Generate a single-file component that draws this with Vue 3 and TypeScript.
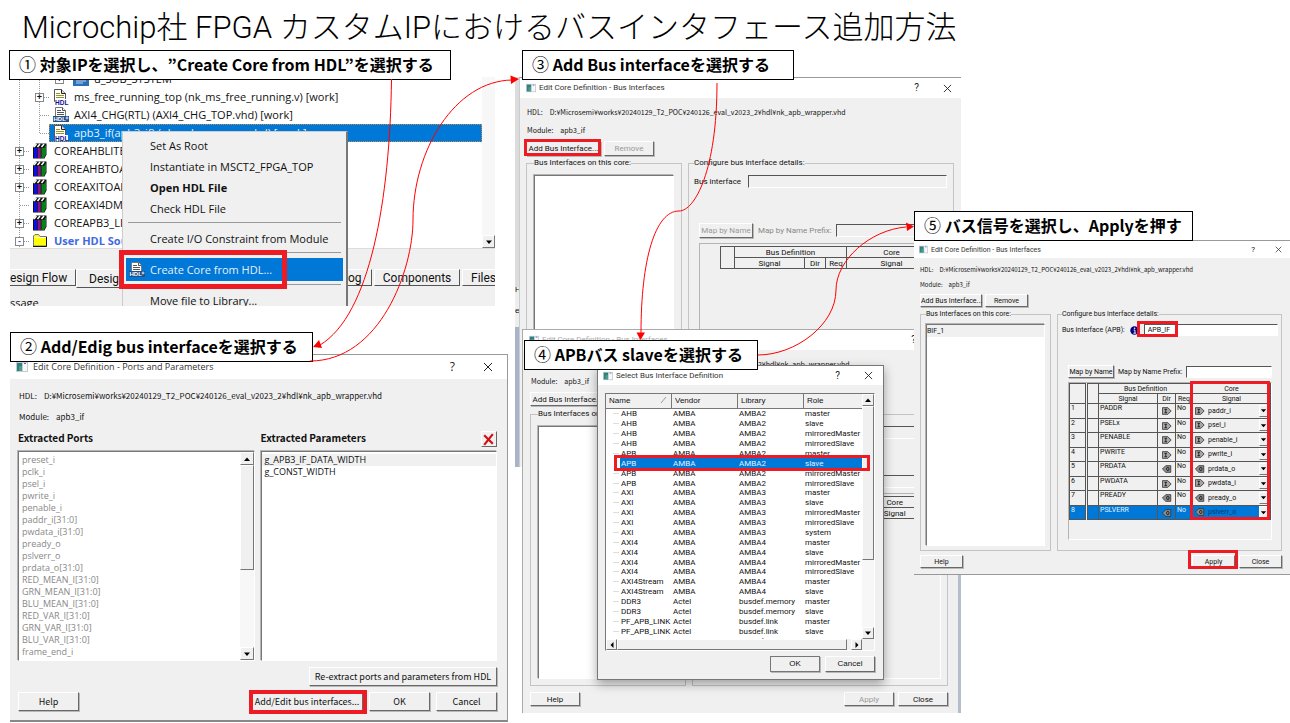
<script setup lang="ts">
interface TreeRow { label: string; icon: 'chip' | 'doc' | 'docplus' | 'books' | 'folder'; level: number; expand?: '+' | '-'; selected?: boolean; folder?: boolean }
interface BusRow { name: string; vendor: string; library: string; role: string }
interface SignalRow { bus: string; dir: 'I' | 'O'; core: string }

const hdlPath = 'D:¥Microsemi¥works¥20240129_T2_POC¥240126_eval_v2023_2¥hdl¥nk_apb_wrapper.vhd'

const tree: TreeRow[] = [
  { label: 'u_SUB_SYSTEM', icon: 'chip', level: 2, expand: '+' },
  { label: 'ms_free_running_top (nk_ms_free_running.v) [work]', icon: 'doc', level: 1, expand: '+' },
  { label: 'AXI4_CHG(RTL) (AXI4_CHG_TOP.vhd) [work]', icon: 'docplus', level: 1 },
  { label: 'apb3_if(apb3_if) (nk_apb_wrapper.vhd) [work]', icon: 'doc', level: 1, selected: true },
  { label: 'COREAHBLITE_LIB', icon: 'books', level: 0, expand: '+' },
  { label: 'COREAHBTOAPB3_LIB', icon: 'books', level: 0, expand: '+' },
  { label: 'COREAXITOAHBL_LIB', icon: 'books', level: 0, expand: '+' },
  { label: 'COREAXI4DMA_LIB', icon: 'books', level: 0 },
  { label: 'COREAPB3_LIB', icon: 'books', level: 0, expand: '+' },
  { label: 'User HDL Source Files', icon: 'folder', level: 0, expand: '-', folder: true },
]

const ports: string[] = ['preset_i', 'pclk_i', 'psel_i', 'pwrite_i', 'penable_i', 'paddr_i[31:0]', 'pwdata_i[31:0]', 'pready_o', 'pslverr_o', 'prdata_o[31:0]', 'RED_MEAN_I[31:0]', 'GRN_MEAN_I[31:0]', 'BLU_MEAN_I[31:0]', 'RED_VAR_I[31:0]', 'GRN_VAR_I[31:0]', 'BLU_VAR_I[31:0]', 'frame_end_i']

function group(name: string, vendor: string, library: string, roles: string[]): BusRow[] {
  return roles.map((role) => ({ name, vendor, library, role }))
}
const four = ['master', 'slave', 'mirroredMaster', 'mirroredSlave']
const two = ['master', 'slave']
const buses: BusRow[] = [
  ...group('AHB', 'AMBA', 'AMBA2', four),
  ...group('APB', 'AMBA', 'AMBA2', four),
  ...group('AXI', 'AMBA', 'AMBA3', [...four, 'system']),
  ...group('AXI4', 'AMBA', 'AMBA4', four),
  ...group('AXI4Stream', 'AMBA', 'AMBA4', two),
  ...group('DDR3', 'Actel', 'busdef.memory', two),
  ...group('PF_APB_LINK', 'Actel', 'busdef.link', two),
  ...group('PF_CDR_CLK', 'Actel', 'busdef.clock', ['master']),
]
const selectedBus = 5

const signals: SignalRow[] = [
  { bus: 'PADDR', dir: 'I', core: 'paddr_i' },
  { bus: 'PSELx', dir: 'I', core: 'psel_i' },
  { bus: 'PENABLE', dir: 'I', core: 'penable_i' },
  { bus: 'PWRITE', dir: 'I', core: 'pwrite_i' },
  { bus: 'PRDATA', dir: 'O', core: 'prdata_o' },
  { bus: 'PWDATA', dir: 'I', core: 'pwdata_i' },
  { bus: 'PREADY', dir: 'O', core: 'pready_o' },
  { bus: 'PSLVERR', dir: 'O', core: 'pslverr_o' },
]

const marks = [
  { x: 119, y: 250, w: 168, h: 39, s: 5 },
  { x: 249, y: 690, w: 118, h: 24, s: 4 },
  { x: 524, y: 139, w: 77, h: 17, s: 3 },
  { x: 614, y: 455, w: 256, h: 16, s: 3 },
  { x: 1137, y: 321, w: 41, h: 16, s: 3 },
  { x: 1190, y: 381, w: 80, h: 139, s: 3 },
  { x: 1188, y: 550, w: 50, h: 19, s: 3 },
]
</script>

<template>
  <main class="slide">
    <svg class="defs" aria-hidden="true">
      <symbol id="i-window" viewBox="0 0 12 12">
        <rect x="0" y="1" width="12" height="10" fill="#c3ccd2" />
        <rect x="1" y="2" width="5" height="8" fill="#2e7f86" />
        <rect x="3" y="5" width="3" height="5" fill="#4da07c" />
        <rect x="7" y="2" width="4" height="8" fill="#f6f8fa" />
        <rect x="8" y="2" width="2" height="1" fill="#3c6fb4" />
      </symbol>
      <symbol id="i-close" viewBox="0 0 10 10"><path d="M1 1L9 9M9 1L1 9" stroke="#222" stroke-width="1" fill="none" /></symbol>
      <symbol id="i-doc" viewBox="0 0 16 16">
        <path d="M1.500 .500H8.500L12.500 4.500V12.500H1.500Z" fill="#fff" stroke="#555" />
        <path d="M8.500 .500V4.500H12.500" fill="#ddd" stroke="#222" />
        <path d="M3 4.500H7M3 6.500H11M3 8.500H11" stroke="#97932b" />
        <rect x="2" y="10" width="13" height="6" fill="#fff" />
        <text x="2" y="15.500" font-size="6.500" font-weight="700" font-family="Liberation Sans, sans-serif" fill="#101090">HDL</text>
      </symbol>
      <symbol id="i-docplus" viewBox="0 0 16 16">
        <path d="M2.500 9.500V.500H9.500L12.500 3.500V9.500" fill="#fff" stroke="#777" />
        <path d="M9.500 .500V3.500H12.500" fill="#fff" stroke="#555" />
        <path d="M4 3.500H8M4 5.500H11M4 7.500H11" stroke="#555" />
        <rect x="0" y="9" width="16" height="6" fill="#244e86" />
        <text x="0.500" y="14.300" font-size="6" font-weight="700" font-family="Liberation Sans, sans-serif" fill="#fff">HDL</text>
        <path d="M14 9.500V12.500M12.500 11H15.500" stroke="#fff" stroke-width=".8" />
      </symbol>
      <symbol id="i-books" viewBox="0 0 16 16">
        <path d="M0 4.500L3 .500H13.500V11.500L11.500 15.500H0Z" fill="#111" />
        <path d="M1 4L3.500 1M4.500 4L7 1M8.500 4L11 1" stroke="#fff" stroke-width="1.500" />
        <rect x="1" y="5" width="3" height="10" fill="#0c0cf0" />
        <rect x="4.700" y="5" width="3" height="10" fill="#8a1480" />
        <path d="M8.500 5H11V15H8.500ZM11 5L13 2V11L11 15Z" fill="#08801c" />
      </symbol>
      <symbol id="i-folder" viewBox="0 0 16 16">
        <path d="M.500 13V3L2 1.500H5.500L7 3.500H13.500V13Z" fill="#ffff00" stroke="#777" />
        <path d="M1.500 4.500H12.500" stroke="#fff" />
        <path d="M0 13.500H13.500V4" stroke="#111" fill="none" />
      </symbol>
      <symbol id="i-chip" viewBox="0 0 16 16"><rect x="0" y="2" width="16" height="13" fill="#2d6fb5" /><path d="M3 10H13M3 12H10" stroke="#bcd7f2" /></symbol>
      <symbol id="i-dirI" viewBox="0 0 12 9">
        <path d="M.500 .500H7L11 4.500L7 8.500H.500Z" fill="#a6a6a6" stroke="#333" />
        <path d="M3 2.500H6M3 6.500H6M4.500 2.500V6.500" stroke="#111" fill="none" />
      </symbol>
      <symbol id="i-dirO" viewBox="0 0 12 9">
        <path d="M10.500 .500H4.500L.500 4.500L4.500 8.500H10.500Z" fill="#8e8e8e" stroke="#333" />
        <ellipse cx="7" cy="4.500" rx="1.500" ry="2" stroke="#111" fill="none" />
      </symbol>
      <symbol id="i-up" viewBox="0 0 8 8"><path d="M1 6L4 2.500L7 6Z" /></symbol>
      <symbol id="i-down" viewBox="0 0 8 8"><path d="M1 2.500H7L4 6Z" /></symbol>
      <symbol id="i-left" viewBox="0 0 8 8"><path d="M5.500 1V7L2.500 4Z" /></symbol>
      <symbol id="i-right" viewBox="0 0 8 8"><path d="M2.500 1V7L5.500 4Z" /></symbol>
    </svg>

    <h1>Microchip社 FPGA カスタムIPにおけるバスインタフェース追加方法</h1>

    <!-- Design hierarchy -->
    <section class="hierarchy">
      <div class="tree-area">
        <ul class="tree">
          <li v-for="row in tree" :key="row.label" :class="['lv' + row.level, { selected: row.selected, user: row.folder }]">
            <span class="twig"><i v-if="row.expand" class="box">{{ row.expand }}</i></span>
            <span class="node">
              <svg class="ticon"><use :href="'#i-' + row.icon" /></svg>
              <span>{{ row.label }}</span>
            </span>
          </li>
        </ul>
        <div class="tree-scroll"><button class="sb" aria-label="Scroll down"><svg><use href="#i-down" /></svg></button></div>
      </div>
      <nav class="tabs">
        <button class="tab first">esign Flow</button>
        <button class="tab active">Design Hierarchy</button>
        <button class="tab log">og</button>
        <button class="tab comp">Components</button>
        <button class="tab files">Files</button>
      </nav>
      <p class="message">ssage</p>
    </section>
    <div class="menu">
      <button>Set As Root</button>
      <button>Instantiate in MSCT2_FPGA_TOP</button>
      <button class="strong">Open HDL File</button>
      <button>Check HDL File</button>
      <hr>
      <button>Create I/O Constraint from Module</button>
      <hr>
      <button class="hot"><svg><use href="#i-docplus" /></svg>Create Core from HDL...</button>
      <hr>
      <button>Move file to Library...</button>
    </div>

    <!-- Ports and parameters -->
    <section class="win ports-win">
      <header><svg class="app"><use href="#i-window" /></svg><span>Edit Core Definition - Ports and Parameters</span><button class="q">?</button><button class="x" aria-label="Close"><svg><use href="#i-close" /></svg></button></header>
      <div class="body">
        <p class="path"><span>HDL:</span><span>{{ hdlPath }}</span></p>
        <p class="path"><span>Module:</span><span>apb3_if</span></p>
        <div class="two-lists">
          <div class="col">
            <h2>Extracted Ports</h2>
            <div class="listbox">
              <ul class="grey"><li v-for="p in ports" :key="p">{{ p }}</li></ul>
              <div class="vscroll">
                <button class="sb" aria-label="Scroll up"><svg><use href="#i-up" /></svg></button>
                <span class="thumb"></span><span class="track"></span>
                <button class="sb" aria-label="Scroll down"><svg><use href="#i-down" /></svg></button>
              </div>
            </div>
          </div>
          <div class="col">
            <div class="h-row"><h2>Extracted Parameters</h2><button class="del" aria-label="Delete"><svg viewBox="0 0 12 12"><path d="M2 2L10 10M10 1L2 11" stroke="#d01010" stroke-width="2" /></svg></button></div>
            <div class="listbox"><ul><li class="cur">g_APB3_IF_DATA_WIDTH</li><li>g_CONST_WIDTH</li></ul></div>
          </div>
        </div>
        <div class="re-row"><button class="btn wide">Re-extract ports and parameters from HDL</button></div>
        <footer><button class="btn">Help</button><span class="grow"></span><button class="btn add">Add/Edit bus interfaces...</button><button class="btn">OK</button><button class="btn">Cancel</button></footer>
      </div>
    </section>

    <!-- Bus interfaces, empty -->
    <div class="behind"><span>H</span><span>el</span></div>
    <section class="win bus-win first-bus">
      <header><svg class="app"><use href="#i-window" /></svg><span>Edit Core Definition - Bus Interfaces</span><button class="q">?</button><button class="x" aria-label="Close"><svg><use href="#i-close" /></svg></button></header>
      <div class="body">
        <p class="path"><span>HDL:</span><span>{{ hdlPath }}</span></p>
        <p class="path"><span>Module:</span><span>apb3_if</span></p>
        <div class="btns"><button class="btn addb">Add Bus Interface...</button><button class="btn rem" disabled>Remove</button></div>
        <div class="groups">
          <fieldset class="gl"><legend>Bus Interfaces on this core:</legend><div class="listbox"></div></fieldset>
          <fieldset class="gr"><legend>Configure bus interface details:</legend>
            <label class="frow"><span>Bus interface</span><input class="flat" type="text" disabled></label>
            <div class="maprow"><button class="btn map" disabled>Map by Name</button><label class="dim">Map by Name Prefix: <input class="flat" type="text" disabled></label></div>
            <div class="frame">
              <table class="sig">
                <thead>
                  <tr><th class="c2" rowspan="2"></th><th colspan="3">Bus Definition</th><th class="c6">Core</th></tr>
                  <tr><th class="c3">Signal</th><th class="c4">Dir</th><th class="c5">Req</th><th>Signal</th></tr>
                </thead>
              </table>
            </div>
          </fieldset>
        </div>
      </div>
    </section>

    <section class="win bus-win second-bus">
      <header class="faded"><svg class="app"><use href="#i-window" /></svg><span>Edit Core Definition - Bus Interfaces</span><button class="q">?</button><button class="x" aria-label="Close"><svg><use href="#i-close" /></svg></button></header>
      <div class="body">
        <p class="path"><span>HDL:</span><span>{{ hdlPath }}</span></p>
        <p class="path"><span>Module:</span><span>apb3_if</span></p>
        <div class="btns"><button class="btn addb">Add Bus Interface...</button><button class="btn rem" disabled>Remove</button></div>
        <div class="groups">
          <fieldset class="gl"><legend>Bus Interfaces on this core:</legend><div class="listbox"></div></fieldset>
          <fieldset class="gr"><legend>Configure bus interface details:</legend>
            <label class="frow"><span>Bus interface</span><input class="flat" type="text" disabled></label>
            <div class="maprow"><button class="btn map" disabled>Map by Name</button><label class="dim">Map by Name Prefix: <input class="flat" type="text" disabled></label></div>
            <div class="frame">
              <table class="sig">
                <thead>
                  <tr><th class="c2" rowspan="2"></th><th colspan="3">Bus Definition</th><th class="c6">Core</th></tr>
                  <tr><th class="c3">Signal</th><th class="c4">Dir</th><th class="c5">Req</th><th>Signal</th></tr>
                </thead>
              </table>
            </div>
          </fieldset>
        </div>
        <footer><button class="btn">Help</button><span class="grow"></span><button class="btn" disabled>Apply</button><button class="btn">Close</button></footer>
      </div>
    </section>

    <!-- Bus definition picker -->
    <section class="win picker">
      <header><svg class="app"><use href="#i-window" /></svg><span>Select Bus Interface Definition</span><button class="q">?</button><button class="x" aria-label="Close"><svg><use href="#i-close" /></svg></button></header>
      <div class="body">
        <div class="pick-box">
          <div class="pick-main">
            <div class="pick-clip">
              <table class="pick">
                <thead><tr><th class="pn"><span>Name</span><svg viewBox="0 0 8 8"><path d="M1 7L6 1" stroke="#999" fill="none" /></svg></th><th>Vendor</th><th>Library</th><th>Role</th></tr></thead>
                <tbody>
                  <tr v-for="(b, i) in buses" :key="i" :class="{ on: i === selectedBus }"><td class="pn">{{ b.name }}</td><td>{{ b.vendor }}</td><td>{{ b.library }}</td><td>{{ b.role }}</td></tr>
                </tbody>
              </table>
            </div>
            <div class="vscroll">
              <button class="sb" aria-label="Scroll up"><svg><use href="#i-up" /></svg></button>
              <span class="thumb"></span><span class="track"></span>
              <button class="sb" aria-label="Scroll down"><svg><use href="#i-down" /></svg></button>
            </div>
          </div>
          <div class="hscroll">
            <button class="sb" aria-label="Scroll left"><svg><use href="#i-left" /></svg></button>
            <span class="thumb"></span><span class="track"></span>
            <button class="sb" aria-label="Scroll right"><svg><use href="#i-right" /></svg></button>
          </div>
        </div>
        <footer><span class="grow"></span><button class="btn ok">OK</button><button class="btn">Cancel</button></footer>
      </div>
    </section>

    <!-- Bus interface with signals assigned -->
    <section class="win bus-win third-bus">
      <header><svg class="app"><use href="#i-window" /></svg><span>Edit Core Definition - Bus Interfaces</span><button class="q">?</button><button class="x" aria-label="Close"><svg><use href="#i-close" /></svg></button></header>
      <div class="body">
        <p class="path"><span>HDL:</span><span>{{ hdlPath }}</span></p>
        <p class="path"><span>Module:</span><span>apb3_if</span></p>
        <div class="btns"><button class="btn addb">Add Bus Interface...</button><button class="btn rem">Remove</button></div>
        <div class="groups">
          <fieldset class="gl"><legend>Bus Interfaces on this core:</legend><div class="listbox"><ul><li class="cur">BIF_1</li></ul></div></fieldset>
          <fieldset class="gr"><legend>Configure bus interface details:</legend>
            <label class="frow"><span>Bus interface (APB):</span>
              <svg class="info" viewBox="0 0 10 10"><circle cx="5" cy="5" r="4.700" fill="#000080" /><path d="M4 4.500H5.500V8M3.800 8H6.800" stroke="#fff" fill="none" /><circle cx="5.100" cy="2.500" r=".9" fill="#fff" /></svg>
              <input class="flat" type="text" value="APB_IF"></label>
            <div class="maprow"><button class="btn map">Map by Name</button><label>Map by Name Prefix: <input class="flat" type="text"></label></div>
            <div class="frame">
              <table class="sig">
                <thead>
                  <tr><th class="c1" rowspan="2"></th><th class="c2" rowspan="2"></th><th colspan="3">Bus Definition</th><th class="c6">Core</th></tr>
                  <tr><th class="c3">Signal</th><th class="c4">Dir</th><th class="c5">Req</th><th>Signal</th></tr>
                </thead>
                <tbody>
                  <tr v-for="(s, i) in signals" :key="s.bus" :class="{ on: i === 7 }">
                    <td class="c1">{{ i + 1 }}</td><td></td><td>{{ s.bus }}</td>
                    <td class="mid"><svg class="dir"><use :href="'#i-dir' + s.dir" /></svg></td>
                    <td>No</td>
                    <td class="core"><div class="combo"><svg class="dir"><use :href="'#i-dir' + s.dir" /></svg><select :aria-label="s.bus"><option>{{ s.core }}</option></select><span class="drop"><svg><use href="#i-down" /></svg></span></div></td>
                  </tr>
                </tbody>
              </table>
            </div>
          </fieldset>
        </div>
        <footer><button class="btn">Help</button><span class="grow"></span><button class="btn">Apply</button><button class="btn">Close</button></footer>
      </div>
    </section>

    <!-- Callouts, highlights and connectors -->
    <div class="note n1"><b>①</b> 対象IPを選択し、”Create Core from HDL”を選択する</div>
    <div class="note n2"><b>②</b> Add/Edig bus interfaceを選択する</div>
    <div class="note n3"><b>③</b> Add Bus interfaceを選択する</div>
    <div class="note n4"><b>④</b> APBバス slaveを選択する</div>
    <div class="note n5"><b>⑤</b> バス信号を選択し、Applyを押す</div>
    <svg class="overlay" viewBox="0 0 1290 723" aria-hidden="true">
      <rect v-for="(m, i) in marks" :key="i" :x="m.x + m.s / 2" :y="m.y + m.s / 2" :width="m.w - m.s" :height="m.h - m.s" fill="none" stroke="#ed1c24" :stroke-width="m.s" />
      <g fill="none" stroke="#f00" stroke-width="1">
        <path d="M391.500 79C390 200 370 315 320 345" />
        <path d="M310 361C380 361 413 270 413 220C413 150 455 81 512 80" />
        <path d="M717 83C717 170 695 211 679 211C655 211 641 260 641 333" />
        <path d="M758 355C795 355 836 325 836 290C836 260 870 230 906 227" />
      </g>
      <path fill="#f00" d="M313 347L319 340L322 348ZM519 79L510.500 75.500L511 84ZM640.500 340L636.500 332.500H645ZM914 226.500L906 222.500L907 231Z" />
    </svg>
  </main>
</template>

<style>
html, body { margin: 0; background: #fff; }
</style>

<style scoped>
* { box-sizing: border-box; }
.slide { position: relative; min-height: 100vh; overflow: hidden; color: #111; font-family: "Liberation Sans", "Noto Sans CJK JP", sans-serif; }
.defs { position: absolute; width: 0; height: 0; }
h1 { margin: 0; padding: 5px 22px; font: 300 31px/46px Roboto, "Noto Sans CJK JP", sans-serif; color: #000; white-space: nowrap; }
ul, p, h2, fieldset { margin: 0; padding: 0; }
ul { list-style: none; }
button, input, select { font: inherit; color: inherit; margin: 0; padding: 0; border: 0; border-radius: 0; background: none; }

/* Hierarchy pane */
.hierarchy { position: absolute; left: 10px; top: 70px; width: 485px; height: 236px; overflow: hidden; background: #f0f0f0; font: 11px/18px "Open Sans", "Noto Sans", sans-serif; clip-path: inset(7px 0 0 0); }
.tree-area { display: flex; align-items: stretch; height: 179px; background: #fff; border-bottom: 1px solid #ddd; }
.tree { flex: 1; overflow: hidden; background: repeating-linear-gradient(#999 0 1px, #fff 1px 2px) 9px 0 / 1px 100% no-repeat; }
.tree li { display: flex; height: 18px; white-space: nowrap; }
.twig { display: flex; align-items: center; justify-content: center; width: 19px; background: repeating-linear-gradient(90deg, #999 0 1px, #fff 1px 2px) 10px 9px / 9px 1px no-repeat; }
.lv1, .lv2 { background: repeating-linear-gradient(#999 0 1px, #fff 1px 2px) 29px 0 / 1px 100% no-repeat; }
.lv1 { padding-left: 20px; }
.lv2 { padding-left: 40px; }
.tree .selected { background-size: 1px 9px; }
.box { display: block; width: 9px; height: 9px; border: 1px solid #888; background: #fff; font: 700 9px/7px "Liberation Sans", sans-serif; text-align: center; }
.node { display: flex; flex: 1; align-items: center; gap: 5px; padding-left: 4px; }
.ticon { width: 16px; height: 16px; }
.selected .node { background: #0078d7; color: #e8f2fc; outline: 1px dotted #c98a4a; outline-offset: -1px; }
.user { color: #4169e1; font-weight: 700; }
.tree-scroll { display: flex; align-items: flex-end; width: 13px; background: #f7f7f7; }
.sb { display: flex; align-items: center; justify-content: center; width: 100%; height: 13px; background: #f0f0f0; border: 1px solid; border-color: #fff #777 #777 #fff; }
.sb svg { width: 8px; height: 8px; }
.tabs { display: flex; align-items: flex-start; padding-top: 20px; height: 45px; font: 12px/14px Roboto, "Liberation Sans", sans-serif; }
.tab { height: 17px; border-top: 1px solid #fff; border-right: 1px solid #555; border-bottom: 1px solid #555; white-space: nowrap; overflow: hidden; }
.tab.first { width: 66px; text-align: left; }
.tab.active { width: 226px; height: 19px; padding-left: 12px; text-align: left; border-left: 1px solid #fff; border-right: 0; }
.tab.log { width: 70px; padding-left: 46px; text-align: left; }
.tab.comp { width: 86px; margin-left: 2px; border-left: 1px solid #fff; }
.tab.files { flex: 1; margin-left: 2px; border-right: 0; border-left: 1px solid #fff; padding-left: 8px; text-align: left; }

.menu { position: absolute; left: 122px; top: 131px; width: 226px; height: 175px; overflow: hidden; padding: 3px; background: #f0f0f0; border: 1px solid #ccc; border-right: 2px solid #777; border-bottom: 0; font: 11px/21px "Open Sans", "Noto Sans", sans-serif; }
.menu button { display: flex; align-items: center; width: 100%; height: 21px; padding-left: 24px; white-space: nowrap; }
.menu .strong { font-weight: 700; }
.menu hr { height: 1px; margin: 3px 2px 5px; border: 0; background: #999; }
.menu .hot { height: 23px; padding-left: 3px; gap: 5px; background: #0078d7; color: #e4f1fd; }
.menu .hot svg { width: 16px; height: 16px; }

/* Windows */
.win { position: absolute; display: flex; flex-direction: column; background: #f0f0f0; }
.win header { display: flex; align-items: center; background: #fff; font-family: Roboto, "Noto Sans", sans-serif; white-space: nowrap; color: #333; flex: none; }
.win header .q { margin-left: auto; color: #222; }
.win header svg { display: block; }
.body { display: flex; flex: 1; flex-direction: column; min-height: 0; }
.path { display: flex; gap: 7px; white-space: nowrap; font-family: "Noto Sans CJK JP", sans-serif; }
.btn { flex: none; background: #f0f0f0; border: 1px solid; border-color: #fff #696969 #696969 #fff; box-shadow: 1px 1px 0 #b8b8b8; white-space: nowrap; text-align: center; }
.btn:disabled { color: #999; }
.listbox { display: flex; flex: 1; background: #fff; border: 1px solid; border-color: #777 #fff #fff #777; box-shadow: -1px -1px 0 #b5b5b5; min-height: 0; }
.listbox ul { flex: 1; overflow: hidden; }
.cur { background: #f0f0f0; }
.vscroll { display: flex; flex-direction: column; background: #f7f7f7; }
.thumb { background: #f0f0f0; border: 1px solid; border-color: #fff #777 #777 #fff; }
.track { flex: 1; }
.grow { flex: 1; }
footer { display: flex; }

.ports-win { left: 10px; top: 354px; width: 498px; height: 368px; border: 1px solid #999; border-left: 0; border-bottom: 2px solid #888; font: 9px/12px "Noto Sans CJK JP", sans-serif; }
.ports-win header { height: 24px; padding: 0 14px 0 6px; font-family: "Open Sans", "Noto Sans", sans-serif; font-size: 9px; }
.ports-win .app { width: 12px; height: 12px; margin-right: 5px; }
.ports-win .q { font-size: 12px; margin-right: 28px; }
.ports-win .x svg { width: 10px; height: 10px; }
.ports-win .body { padding: 10px 10px 9px 8px; }
.ports-win .path { font-size: 8px; line-height: 13px; margin-bottom: 8px; padding-left: 1px; }
.two-lists { display: flex; gap: 6px; flex: 1; min-height: 0; }
.two-lists .col { display: flex; flex: 1; flex-direction: column; min-width: 0; }
.two-lists h2 { height: 20px; font-size: 10px; line-height: 14px; }
.h-row { display: flex; justify-content: space-between; align-items: flex-start; height: 20px; }
.del { width: 16px; height: 16px; border: 1px solid; border-color: #fff #696969 #696969 #fff; }
.del svg { display: block; width: 13px; height: 13px; }
.ports-win .listbox { font: 9px/12px "Open Sans", "Noto Sans", sans-serif; }
.ports-win .listbox ul { padding: 2px 0 0 0; }
.ports-win .listbox li { padding-left: 3px; }
.grey { color: #888; }
.ports-win .vscroll { width: 14px; }
.ports-win .thumb { height: 105px; }
.re-row { display: flex; justify-content: flex-end; padding: 6px 0; }
.ports-win .btn { width: 61px; height: 19px; line-height: 15px; }
.ports-win .btn.wide { width: 188px; }
.ports-win .btn.add { width: 112px; }
.ports-win footer { gap: 6px; }

.behind { position: absolute; left: 515px; top: 77px; width: 5px; height: 390px; padding-top: 202px; overflow: hidden; background: linear-gradient(#dcdcdc 0 210px, #eee 210px 250px, #a8b4c8 250px); font-size: 8px; line-height: 21px; }
.behind span { display: block; }
.bus-win { font: 8px/14px Roboto, "Liberation Sans", sans-serif; --h: 15px; --field: 13px; --list-gap: 7px; }
.bus-win header { font-size: 8px; padding: 0 9px 0 6px; }
.bus-win .app { width: 10px; height: 10px; margin-right: 3px; }
.bus-win .q { font-size: 10px; margin-right: 24px; }
.bus-win .x svg { width: 9px; height: 9px; }
.bus-win .body { padding: 7px 7px 6px 6px; }
.bus-win .path { font-size: 7px; padding-left: 1px; margin-bottom: 4px; }
.bus-win .btns { display: flex; gap: 3px; }
.bus-win .btn { height: var(--h); line-height: 11px; }
.addb { width: 75px; }
.rem { width: 50px; }
.groups { display: flex; flex: 1; gap: 6px; margin-top: 2px; min-height: 0; }
fieldset { display: flex; flex-direction: column; min-width: 0; border: 1px solid #c4c4c4; padding: var(--list-gap) var(--list-gap) 6px; }
legend { line-height: 10px; padding: 0; white-space: nowrap; }
.gl { width: 156px; }
.gr { flex: 1; }
.gr.gr { padding-left: 5px; padding-right: 6px; }
.frow { display: flex; align-items: center; gap: 7px; height: var(--field); white-space: nowrap; }
.flat { flex: 1; min-width: 0; height: 100%; border: 1px solid; border-color: #555 #fff #fff #555; }
.flat:enabled { background: #fff; }
.maprow { display: flex; align-items: center; gap: 5px; margin: 35px 0 5px 5px; height: var(--h); white-space: nowrap; }
.maprow label { display: flex; flex: 1; min-width: 0; align-items: center; gap: 4px; height: 100%; }
.maprow .flat { height: var(--field); }
.dim { color: #888; }
.map { width: 54px; }
.frame { flex: 1; margin-left: 5px; padding: 2px 0 0 20px; border: 1px solid; border-color: #b4b4b4 #fff #fff #b4b4b4; min-height: 0; overflow: hidden; }
.sig { border-collapse: collapse; table-layout: fixed; line-height: 9px; }
.sig th, .sig td { padding: 0; border: 1px solid #555; font-weight: 400; height: 11px; overflow: hidden; white-space: nowrap; }
.c2 { width: 14px; }
.c3 { width: 70px; }
.c4, .c5 { width: 21px; }
.c6 { width: 90px; }

.first-bus { left: 519px; top: 77px; width: 442px; height: 390px; border-top: 1px solid #999; border-left: 1px solid #ccc; }
.first-bus header { height: 20px; }
.second-bus { left: 522px; top: 329px; width: 439px; height: 384px; --h: 14px; border: 1px solid #aaa; border-right: 3px solid #b5bdcb; border-bottom: 0; }
.second-bus header { height: 20px; }
.faded span { color: #aaa; }
.second-bus .path { margin-bottom: 3px; }
.second-bus .btns { margin-top: 1px; }
.second-bus .groups { margin-top: 3px; }
.second-bus .body { padding: 7px 10px 7px 7px; }
.second-bus footer { margin-top: 6px; gap: 4px; }
.second-bus footer .btn { width: 50px; }

.picker { left: 597px; top: 365px; width: 287px; height: 315px; border: 1px solid #777; box-shadow: 0 4px 10px rgba(0, 0, 0, .35); font-size: 8px; line-height: 10px; z-index: 1; }
.picker header { height: 19px; padding: 0 10px 0 5px; font-size: 8px; }
.picker .app { width: 10px; height: 10px; margin-right: 3px; }
.picker .q { font-size: 10px; margin-right: 24px; }
.picker .x svg { width: 9px; height: 9px; }
.picker .body { padding: 8px 8px 7px 7px; }
.pick-box { display: flex; flex-direction: column; flex: 1; min-height: 0; border: 1px solid; border-color: #777 #fff #fff #777; }
.pick-main { display: flex; flex: 1; min-height: 0; background: #fff; }
.pick-clip { flex: 1; overflow: hidden; }
.pick { width: 100%; height: 252px; border-collapse: separate; border-spacing: 0; table-layout: fixed; font-family: Roboto, "Noto Sans", sans-serif; font-size: 8px; line-height: 9px; }
.pick th { width: 66px; height: 15px; padding: 0 3px; text-align: left; font: 8px/12px "Liberation Sans", sans-serif; background: #f0f0f0; border-right: 1px solid #777; border-bottom: 1px solid #777; }
.pick th:last-child { width: auto; border-right: 0; }
.pick th.pn svg { float: right; width: 8px; height: 10px; }
.pick td { padding: 0 0 0 1px; white-space: nowrap; line-height: 9px; }
.pick td.pn { padding-left: 15px; background: linear-gradient(#ddd, #ddd) 7px 50% / 6px 1px no-repeat; }
.pick .on td { background: #0078d7; color: #e4f1fd; }
.pick .on td.pn { background: linear-gradient(#0078d7, #0078d7) 14px 0 / 100% 100% no-repeat; }
.picker .vscroll { width: 12px; }
.picker .sb { height: 12px; }
.picker .vscroll .thumb { height: 154px; }
.hscroll { display: flex; height: 11px; margin-right: 12px; }
.hscroll .sb { width: 11px; height: 11px; }
.hscroll .thumb { width: 230px; }
.picker footer { margin-top: 5px; gap: 5px; }
.picker .btn { width: 50px; height: 16px; line-height: 12px; }
.picker .ok { border-color: #777; }

.third-bus { left: 914px; top: 240px; width: 376px; height: 335px; --h: 13px; --field: 12px; --list-gap: 5px; border-top: 1px solid #999; border-bottom: 1px solid #999; font-size: 7px; line-height: 12px; z-index: 2; }
.third-bus header { height: 17px; font-size: 7px; padding: 0 8px 0 5px; }
.third-bus .app { width: 9px; height: 9px; }
.third-bus .q { font-size: 8px; margin-right: 20px; }
.third-bus .x svg { width: 7px; height: 7px; }
.third-bus .body { padding: 6px 8px 6px 6px; }
.third-bus .path { font-size: 6px; padding: 0; margin-bottom: 3px; gap: 6px; }
.third-bus .btn { line-height: 10px; width: 43px; }
.third-bus .addb { width: 62px; }
.third-bus .gl { width: 131px; }
.third-bus fieldset { padding-bottom: 4px; }
.third-bus .gr { padding: 5px 3px 10px 4px; }
.third-bus .frow { gap: 5px; }
.info { width: 9px; height: 9px; }
.third-bus .flat { padding-left: 3px; }
.third-bus .maprow { margin: 29px 6px 4px 6px; gap: 4px; }
.third-bus .map { width: 46px; }
.third-bus .frame { margin: 0 6px; padding: 0; }
.third-bus .sig { height: 137px; line-height: 8px; }
.third-bus .sig th { height: 10px; }
.third-bus .sig td { height: 14px; padding-left: 1px; vertical-align: top; line-height: 9px; }
.third-bus .c1 { width: 17px; border-right: 3px double #555; }
.third-bus .c2 { width: 12px; }
.third-bus .c3 { width: 59px; }
.third-bus .c4 { width: 18px; }
.third-bus .c5 { width: 17px; }
.third-bus .c6 { width: 78px; }
.dir { display: block; flex: none; width: 10px; height: 8px; margin: 3px auto 0; }
.combo { display: flex; align-items: center; height: 13px; gap: 3px; padding-right: 2px; }
.combo .dir { margin: 0 0 0 1px; }
.combo select { flex: 1; min-width: 0; height: 11px; line-height: 10px; appearance: none; }
.drop { display: flex; flex: none; align-items: center; width: 9px; height: 12px; background: #f0f0f0; border: 1px solid; border-color: #fff #777 #777 #fff; }
.drop svg { width: 7px; height: 7px; }
.sig .on td { background: #0078d7; color: #e4f1fd; }
.sig .on select { color: #063a66; }
.third-bus footer { margin-top: 4px; gap: 4px; }

/* Callouts */
.note { position: absolute; z-index: 3; height: 30px; padding: 0 9px; border: 1px solid #000; background: #fff; color: #000; font: 700 16px/26px "Noto Sans CJK JP", sans-serif; white-space: nowrap; text-spacing-trim: space-all; }
.note b { font-size: 17px; font-weight: 400; }
.n1 { left: 9px; top: 50px; width: 442px; }
.n2 { left: 10px; top: 332px; width: 303px; }
.n3 { left: 522px; top: 50px; width: 272px; }
.n4 { left: 524px; top: 340px; width: 234px; }
.n5 { left: 914px; top: 211px; width: 279px; }
.overlay { position: absolute; z-index: 4; left: 0; top: 0; width: 1290px; height: 723px; pointer-events: none; }
</style>
